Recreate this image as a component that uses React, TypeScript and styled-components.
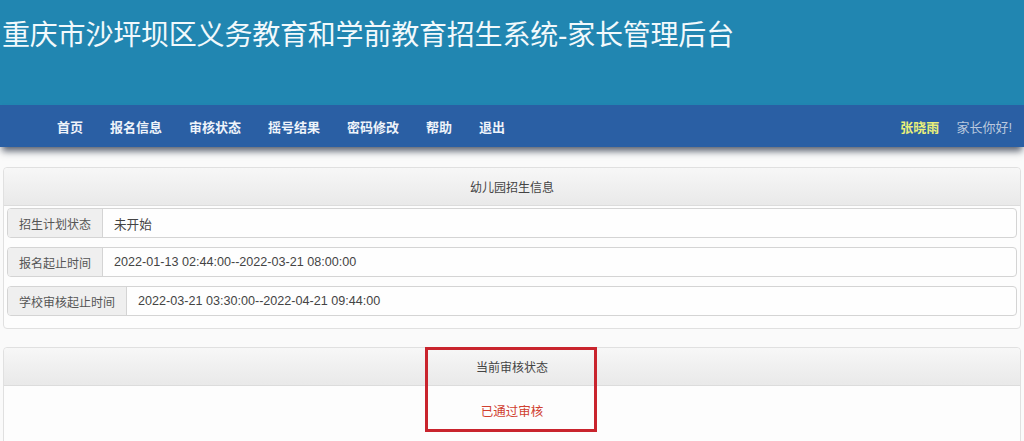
import styled, { createGlobalStyle } from "styled-components";

const GlobalStyle = createGlobalStyle`
  html, body {
    margin: 0;
    padding: 0;
    background: #fafafa;
    font-family: "Liberation Sans", "Noto Sans CJK SC", sans-serif;
    overflow: hidden;
  }
`;

const Page = styled.div`
  width: 1024px;
  height: 441px;
  overflow: hidden;
  background: #fafafa;
`;

const Header = styled.header`
  height: 105px;
  background: #2186b1;
  display: flex;
  align-items: flex-start;
  padding: 19px 0 0 2px;
  box-sizing: border-box;
`;

const Title = styled.h1`
  margin: 0;
  font-size: 28px;
  font-weight: normal;
  line-height: 34px;
  color: #f2f9fc;
  letter-spacing: -0.2px;
  font-family: "Liberation Sans", "Noto Sans CJK SC", sans-serif;
`;

const NavBar = styled.nav`
  height: 42px;
  background: #2a5fa4;
  display: flex;
  align-items: center;
  justify-content: space-between;
  padding: 0 12px 0 43.5px;
  box-shadow: 0 6px 7px -2px rgba(20, 30, 50, 0.7);
  position: relative;
`;

const NavList = styled.ul`
  list-style: none;
  margin: 0;
  padding: 0;
  display: flex;
`;

const NavItem = styled.li`
  padding: 0 13.5px;
  font-size: 13px;
  font-weight: bold;
  color: #eef3fa;
  cursor: pointer;
`;

const UserBox = styled.div`
  display: flex;
  gap: 17px;
  font-size: 13px;
`;

const UserName = styled.span`
  color: #e9f07a;
  font-weight: bold;
`;

const Greeting = styled.span`
  color: #b9c8de;
`;

const Content = styled.main`
  display: flex;
  flex-direction: column;
  gap: 18px;
  padding: 20px 3px 0 3px;
`;

const Panel = styled.section`
  position: relative;
  border: 1px solid #e0e0e0;
  border-radius: 4px;
  background: #fdfdfd;
`;

const PanelHeading = styled.div`
  height: 37px;
  display: flex;
  align-items: center;
  justify-content: center;
  font-size: 12px;
  color: #444;
  background: linear-gradient(#f7f7f7, #e9e9e9);
  border-bottom: 1px solid #dcdcdc;
  border-radius: 4px 4px 0 0;
`;

const PanelBody = styled.div`
  display: flex;
  flex-direction: column;
  gap: 9px;
  padding: 2px 3px 12px 3px;
`;

const StatusBody = styled.div`
  height: 60px;
  display: flex;
  justify-content: center;
  padding-top: 15px;
  box-sizing: border-box;
`;

const StatusText = styled.span`
  font-size: 12.5px;
  color: #d04030;
`;

const InputGroup = styled.div`
  display: flex;
  height: 30px;
  box-sizing: border-box;
  border: 1px solid #d4d4d4;
  border-radius: 4px;
  overflow: hidden;
  background: #fefefe;
`;

const Addon = styled.span`
  display: flex;
  align-items: center;
  padding: 0 11px;
  background: #efefef;
  border-right: 1px solid #d4d4d4;
  color: #555;
  font-size: 12px;
  white-space: nowrap;
`;

const Value = styled.span`
  display: flex;
  align-items: center;
  padding-left: 11px;
  color: #444;
  font-size: 12.6px;
`;

const Highlight = styled.div`
  position: absolute;
  left: 421px;
  top: -1px;
  width: 166px;
  height: 79px;
  border: 3px solid #c9242d;
  pointer-events: none;
`;

const navItems = ["首页", "报名信息", "审核状态", "摇号结果", "密码修改", "帮助", "退出"];

const rows = [
  { label: "招生计划状态", value: "未开始" },
  { label: "报名起止时间", value: "2022-01-13 02:44:00--2022-03-21 08:00:00" },
  { label: "学校审核起止时间", value: "2022-03-21 03:30:00--2022-04-21 09:44:00" },
];

export default function App() {
  return (
    <Page>
      <GlobalStyle />
      <Header>
        <Title>重庆市沙坪坝区义务教育和学前教育招生系统-家长管理后台</Title>
      </Header>
      <NavBar>
        <NavList>
          {navItems.map((item) => (
            <NavItem key={item}>{item}</NavItem>
          ))}
        </NavList>
        <UserBox>
          <UserName>张晓雨</UserName>
          <Greeting>家长你好!</Greeting>
        </UserBox>
      </NavBar>
      <Content>
        <Panel>
          <PanelHeading>幼儿园招生信息</PanelHeading>
          <PanelBody>
            {rows.map((row) => (
              <InputGroup key={row.label}>
                <Addon>{row.label}</Addon>
                <Value>{row.value}</Value>
              </InputGroup>
            ))}
          </PanelBody>
        </Panel>
        <Panel>
          <PanelHeading>当前审核状态</PanelHeading>
          <StatusBody>
            <StatusText>已通过审核</StatusText>
          </StatusBody>
          <Highlight />
        </Panel>
      </Content>
    </Page>
  );
}
